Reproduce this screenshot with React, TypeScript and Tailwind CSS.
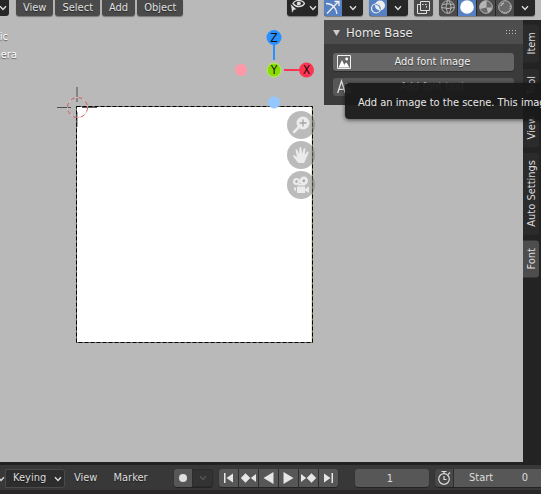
import React from "react";

const shadow = "[text-shadow:0_1px_1px_rgba(0,0,0,0.5)]";

function Chevron({ className = "" }: { className?: string }) {
  return (
    <svg width="8" height="6" viewBox="0 0 8 6" fill="none" stroke="currentColor" strokeWidth="1.4" className={className}>
      <path d="M1 1.2 4 4.4 7 1.2" />
    </svg>
  );
}

function MenuButton({ label }: { label: string }) {
  return (
    <button className={"flex h-4 items-center rounded-b-[3px] bg-[#4a4a4a] px-[7px] leading-4 text-[#e0e0e0] shadow-[0_1px_1px_rgba(0,0,0,0.35)] " + shadow}>
      {label}
    </button>
  );
}

function HeaderGroup({ children }: { children: React.ReactNode }) {
  return (
    <div className="flex h-4 gap-px overflow-hidden rounded-b-[3px] bg-[#272727] text-[#dedede] shadow-[0_1px_1px_rgba(0,0,0,0.35)]">
      {children}
    </div>
  );
}

function IconButton({ label, className, children }: { label: string; className: string; children: React.ReactNode }) {
  return (
    <button aria-label={label} className={"flex h-4 shrink-0 items-center justify-center " + className}>
      {children}
    </button>
  );
}

function Header() {
  return (
    <header className="flex h-5 items-start justify-between pr-1.5">
      <div className="flex gap-0.5">
        <button aria-label="Mode" className="mr-[5px] flex h-4 w-[9px] items-center justify-end rounded-br-[3px] bg-[#272727] pr-0.5 text-[#dedede]">
          <Chevron className="shrink-0" />
        </button>
        <MenuButton label="View" />
        <MenuButton label="Select" />
        <MenuButton label="Add" />
        <MenuButton label="Object" />
      </div>
      <div className="flex gap-1.5">
        <HeaderGroup>
          <button aria-label="Object types visibility" className="flex h-4 w-[31px] items-center justify-center gap-1">
            <svg width="16" height="16" viewBox="0 0 16 16">
              <path d="M4 3.500C6-.6 13-.6 15.500 3.500 13 7.600 7 7.600 4 3.500Z" fill="none" stroke="#dedede" strokeWidth="1.300" />
              <circle cx="9.800" cy="3.500" r="2" fill="#dedede" />
              <path d="M1.500 3.800 8 9.500 5 10 3 13.500Z" fill="#dedede" stroke="#272727" strokeWidth=".6" />
            </svg>
            <Chevron />
          </button>
        </HeaderGroup>
        <HeaderGroup>
          <IconButton label="Show gizmos" className="w-[18px] bg-[#5680c2]">
            <svg width="18" height="16" viewBox="0 0 18 16" fill="none" stroke="#eee" strokeWidth="1.3">
              <path d="M2 3.500C8.500 3.500 12.500 8 13 14M3 13.500 14.500 1.500M10.500 1.500H15V6" />
            </svg>
          </IconButton>
          <IconButton label="Gizmo options" className="w-5"><Chevron /></IconButton>
        </HeaderGroup>
        <HeaderGroup>
          <IconButton label="Show overlays" className="w-[18px] bg-[#5680c2]">
            <svg width="16" height="16" viewBox="0 0 16 16">
              <circle cx="6" cy="8.500" r="4.500" fill="none" stroke="#eee" strokeWidth="1.200" />
              <circle cx="10" cy="5.500" r="5" fill="#eee" />
              <path d="M5.500 4.500A4.500 4.500 0 0 1 10.300 9.500" fill="none" stroke="#5680c2" strokeWidth="1.200" />
            </svg>
          </IconButton>
          <IconButton label="Overlay options" className="w-5"><Chevron /></IconButton>
        </HeaderGroup>
        <HeaderGroup>
          <IconButton label="Toggle x-ray" className="w-[19px] bg-[#4a4a4a]">
            <svg width="15" height="16" viewBox="0 0 15 16" fill="none" stroke="#dedede">
              <path d="M4.500 4.500H1.500V13.500H10.500V10.500M4.500 1.500H13.500V10.500H4.500Z" />
              <path d="M6 4.500H10.500V8.500" strokeDasharray="1.500 1.500" />
            </svg>
          </IconButton>
        </HeaderGroup>
        <HeaderGroup>
          <IconButton label="Wireframe" className="w-[18px] bg-[#4a4a4a]">
            <svg width="14" height="16" viewBox="0 0 14 16" fill="none" stroke="#b5b5b5">
              <circle cx="7" cy="7" r="6.300" />
              <path d="M6.500 .7Q3.500 7 6.500 13.300M.7 7.500Q7 9.500 13.300 7.500M1.500 4.500Q7 3 12.500 4.500M8 .7Q12 7 8 13.300" />
            </svg>
          </IconButton>
          <IconButton label="Solid" className="w-[18px] bg-[#5680c2]">
            <svg width="14" height="16" viewBox="0 0 14 16"><circle cx="7" cy="7" r="6.800" fill="#fff" /></svg>
          </IconButton>
          <IconButton label="Material preview" className="w-[18px] bg-[#4a4a4a]">
            <svg width="14" height="16" viewBox="0 0 14 16">
              <circle cx="7" cy="7" r="6.300" fill="#6a6a6a" stroke="#b5b5b5" />
              <path d="M7.500 7.500V.8A6.300 6.300 0 0 0 1 9Z" fill="#b5b5b5" />
              <path d="M7.500 7.500H13A6 6 0 0 1 9 12.800Z" fill="#b5b5b5" />
            </svg>
          </IconButton>
          <IconButton label="Rendered" className="w-[18px] bg-[#4a4a4a]">
            <svg width="14" height="16" viewBox="0 0 14 16" fill="none" stroke="#b5b5b5">
              <circle cx="7" cy="7" r="6.300" fill="#6a6a6a" />
              <path d="M3 6A4 4 0 0 1 6 3" strokeWidth="1.500" />
              <path d="M4 11.500A5 5 0 0 0 11.500 5" strokeWidth="1.500" strokeDasharray="1 1" />
            </svg>
          </IconButton>
          <IconButton label="Shading options" className="w-5"><Chevron /></IconButton>
        </HeaderGroup>
      </div>
    </header>
  );
}

function NavButton({ label, children }: { label: string; children: React.ReactNode }) {
  return (
    <button aria-label={label} className="flex size-7 items-center justify-center rounded-full bg-[#787878]/50">
      <svg width="20" height="20" viewBox="0 0 20 20" fill="#ebebeb">{children}</svg>
    </button>
  );
}

function Scene() {
  return (
    <div className="absolute inset-0">
      <svg className="absolute left-[76px] top-[106px]" width="237" height="237" aria-label="Camera frame">
        <rect x=".5" y=".5" width="236" height="236" fill="#fff" stroke="#787868" />
        <path d="M235.500 1V236" stroke="#eeeecb" />
        <rect x=".5" y=".5" width="236" height="236" fill="none" stroke="#000" strokeDasharray="4 2" />
      </svg>
      <svg className="absolute left-[57px] top-[87px]" width="40" height="40" fill="none" aria-label="3D cursor">
        <path d="M20 0V15M0 20.500H14M25 20.500H40M20 25V40" stroke="#333" strokeOpacity=".8" />
        <circle cx="20.500" cy="20.500" r="10" stroke="#e0c4c4" strokeDasharray="4 4" strokeDashoffset="4" />
        <circle cx="20.500" cy="20.500" r="10" stroke="#d0585e" strokeDasharray="4 4" />
      </svg>
      <svg className="absolute left-[234px] top-[29px]" width="82" height="82" aria-label="Orientation gizmo" fontSize="12" textAnchor="middle">
        <path d="M40 12V31" stroke="#2890ff" strokeWidth="2" />
        <path d="M50 41H70" stroke="#ff3352" strokeWidth="2" />
        <circle cx="7" cy="41" r="6" fill="#ff99a9" />
        <circle cx="40" cy="73.500" r="6" fill="#94c7ff" />
        <circle cx="40" cy="8.500" r="7.500" fill="#2890ff" />
        <circle cx="40" cy="41" r="7" fill="#8bdc00" stroke="#b8ec6a" />
        <circle cx="72.500" cy="41" r="7.500" fill="#ff3352" />
        <text x="40" y="13" fill="#111">Z</text>
        <text x="40" y="45" fill="#111">Y</text>
        <text x="72.500" y="45" fill="#111">X</text>
      </svg>
      <div className="absolute left-[287px] top-[111px] flex flex-col gap-0.5">
        <NavButton label="Zoom">
          <circle cx="12" cy="8" r="6.500" />
          <path d="M8 12 3 17" stroke="#ebebeb" strokeWidth="2.500" strokeLinecap="round" />
          <path d="M12 4.500V11.500M8.500 8H15.500" stroke="#a5a5a5" strokeWidth="1.300" />
        </NavButton>
        <NavButton label="Move">
          <path d="M6.500 17 2.200 11.500C1.500 10.300 3 9.800 3.800 10.600L6 12.400 4.600 5.300C4.400 4 6 3.700 6.400 4.900L8.100 9.300 8.400 3C8.500 1.700 10.200 1.700 10.400 3L11 9.100 12.600 3.900C13 2.700 14.600 3.100 14.400 4.400L13.700 10 16 6.900C16.800 6 18 6.800 17.500 7.900L14.500 15 13 18H8Z" />
        </NavButton>
        <NavButton label="Toggle camera view">
          <circle cx="5.500" cy="6.500" r="3.500" />
          <circle cx="12.800" cy="5.800" r="4.200" />
          <circle cx="5.500" cy="6.500" r="1.200" fill="#a5a5a5" />
          <circle cx="12.800" cy="5.800" r="1.400" fill="#a5a5a5" />
          <path d="M6 11.500H14V14L18 11.500V18L14 15.500V18H6ZM3 12.500H5V15.500H3ZM7 9H14V10.500H7Z" />
        </NavButton>
      </div>
    </div>
  );
}

function Panel() {
  return (
    <section className="min-w-0 self-start bg-[#3b3b3b]">
      <h2 className="flex h-6 items-center bg-[#4d4d4d] pl-[9px] pr-1.5 pt-px text-[13px] text-[#e8e8e8]">
        <svg width="7" height="8" viewBox="0 0 7 8" className="mr-1.5"><path d="M0 1H7L3.500 7Z" fill="#ccc" /></svg>
        <span className={"flex-1 " + shadow}>Home Base</span>
        <svg width="11" height="5"><path d="M0 .5H11M0 3.500H11" stroke="#bbb" strokeDasharray="1 2" /></svg>
      </h2>
      <div className="flex flex-col gap-[7px] px-[9px] py-[9px]">
        <button className="flex h-[18px] items-center rounded-[3px] bg-[#666] pl-1 text-[#f0f0f0] shadow-[0_1px_1px_rgba(0,0,0,0.3)]">
          <svg width="14" height="14" viewBox="0 0 14 14">
            <path d="M.5 .5H13.500V13.500H.5Z" fill="none" stroke="#eee" />
            <path d="M1.500 12.500 5 5 8.500 12.500ZM7.500 9 9.500 7.500 12.500 12.500H8Z" fill="#fff" />
            <circle cx="9.700" cy="4" r="1.400" fill="#fff" />
          </svg>
          <span className={"flex-1 pt-px text-center " + shadow}>Add font image</span>
        </button>
        <button className="flex h-[18px] items-center rounded-[3px] bg-[#575757] pl-1 text-[#ddd]">
          <svg width="14" height="16" viewBox="0 0 14 16" fill="none" stroke="#ddd" strokeWidth="1.300" aria-hidden="true">
            <path d="M.7 14 4.500 2 8.300 14M2 10.300H7M10 4V14" />
            <circle cx="11.500" cy="11.500" r="2" />
          </svg>
          <span className="flex-1 pt-px text-center">Add font text</span>
        </button>
      </div>
    </section>
  );
}

function SideTab({ label, active = false }: { label: string; active?: boolean }) {
  return (
    <button
      role="tab"
      aria-selected={active}
      className={"w-4 rotate-180 rounded-l-[3px] pb-[7px] pr-0.5 pt-2 leading-[14px] text-[#dcdcdc] [writing-mode:vertical-rl] " + (active ? "bg-[#4d4d4d]" : "bg-[#2b2b2b]")}
    >
      {label}
    </button>
  );
}

function Sidebar() {
  return (
    <aside className="relative ml-auto grid w-[217px] flex-1 grid-cols-[1fr_18px]">
      <Panel />
      <div role="tablist" className="flex flex-col items-start gap-1.5 bg-[#232323] pt-[5px]">
        <SideTab label="Item" />
        <SideTab label="Tool" />
        <SideTab label="View" />
        <SideTab label="Auto Settings" />
        <SideTab label="Font" active />
      </div>
      <div role="tooltip" className="absolute left-[21px] top-[63px] flex h-9 items-center whitespace-nowrap rounded-[4px] bg-[#191919]/95 px-[13px] pt-1 text-[#e8e8e8] shadow-[0_1px_4px_rgba(0,0,0,0.6)]">
        Add an image to the scene. This image
      </div>
    </aside>
  );
}

function TransportButton({ label, children }: { label: string; children: React.ReactNode }) {
  return (
    <button aria-label={label} className="flex h-[18px] w-[19px] items-center justify-center bg-[#575757]">
      <svg width="15" height="14" viewBox="0 0 15 14" fill="#e6e6e6">{children}</svg>
    </button>
  );
}

function Timeline() {
  const box = "shadow-[0_1px_1px_rgba(0,0,0,0.4)] ";
  return (
    <footer className="flex h-8 shrink-0 items-start overflow-hidden border-b-4 border-t-[3px] border-b-[#2a2728] border-t-[#222] bg-[#383838] pt-1 text-[#dcdcdc]">
      <button aria-label="Playback" className="flex h-[19px] w-[5px] shrink-0 items-center justify-end"><Chevron className="shrink-0" /></button>
      <button className={"flex h-[19px] w-[60px] shrink-0 items-center justify-between rounded-r-[3px] border border-[#4a4a4a] bg-[#2d2d2d] pl-[7px] pr-0.5 " + shadow}>
        Keying<Chevron />
      </button>
      <button className={"ml-[9px] h-[18px] leading-[18px] " + shadow}>View</button>
      <button className={"ml-4 h-[18px] leading-[18px] " + shadow}>Marker</button>
      <div className={"ml-auto flex shrink-0 overflow-hidden rounded-[3px] " + box}>
        <button aria-label="Auto keying" className="flex h-[18px] w-[18px] items-center justify-center bg-[#575757]">
          <span className="size-2 rounded-full bg-[#e0e0e0]" />
        </button>
        <button aria-label="Auto keying options" className="flex h-[18px] w-[21px] items-center justify-center rounded-r-[3px] border border-[#2c2c2c] bg-[#333] text-[#555]"><Chevron /></button>
      </div>
      <div className={"ml-1.5 flex shrink-0 gap-px overflow-hidden rounded-[3px] bg-[#2d2d2d] " + box}>
        <TransportButton label="Jump to start"><path d="M3 2H4.500V12H3ZM12 2.500V11.500L5.500 7Z" /></TransportButton>
        <TransportButton label="Previous keyframe"><path d="M4.500 2.200 9.300 7 4.500 11.800-.3 7ZM15 3V11L9.800 7Z" /></TransportButton>
        <TransportButton label="Play reverse"><path d="M12.500 1V13L2.500 7Z" /></TransportButton>
        <TransportButton label="Play"><path d="M2.500 1V13L12.500 7Z" /></TransportButton>
        <TransportButton label="Next keyframe"><path d="M10.500 2.200 15.300 7 10.500 11.800 5.700 7ZM0 3V11L5.200 7Z" /></TransportButton>
        <TransportButton label="Jump to end"><path d="M10.500 2H12V12H10.500ZM3 2.500V11.500L9.500 7Z" /></TransportButton>
      </div>
      <input aria-label="Current frame" defaultValue="1" className={"ml-[17px] h-[18px] w-[74px] shrink-0 rounded-[3px] bg-[#575757] pr-1 text-center " + box} />
      <div className={"ml-1.5 flex shrink-0 gap-px overflow-hidden rounded-l-[3px] bg-[#2d2d2d] " + box}>
        <button aria-label="Use preview range" className="flex h-[18px] w-[18px] items-center justify-center bg-[#484848]">
          <svg width="14" height="16" viewBox="0 0 14 16" fill="none" stroke="#dcdcdc" strokeWidth="1.200">
            <circle cx="7" cy="9" r="5.300" />
            <path d="M7 6V9.500H9.500M7 3.500V1.500M4.500 1.500H9.500M11 4.500 13 2.500" />
          </svg>
        </button>
        <label className="flex h-[18px] w-[87px] items-center justify-between bg-[#575757] pl-[15px] pr-[13px]">
          Start
          <input aria-label="Start frame" defaultValue="0" className="w-4 text-right" />
        </label>
      </div>
    </footer>
  );
}

export default function App() {
  return (
    <div className="flex h-screen flex-col overflow-hidden bg-[#b9b9b9] font-['DejaVu_Sans_Condensed','DejaVu_Sans','Noto_Sans',sans-serif] text-[11px]">
      <main className="relative flex min-h-0 flex-1 flex-col overflow-hidden">
        <Scene />
        <div className="relative"><Header /></div>
        <div className={"absolute left-0 top-7 text-white " + shadow}>
          <p className="flex w-2 justify-end overflow-hidden leading-[18px]">ic</p>
          <p className="flex w-[17px] justify-end overflow-hidden leading-[18px]">mera</p>
        </div>
        <Sidebar />
      </main>
      <Timeline />
    </div>
  );
}
